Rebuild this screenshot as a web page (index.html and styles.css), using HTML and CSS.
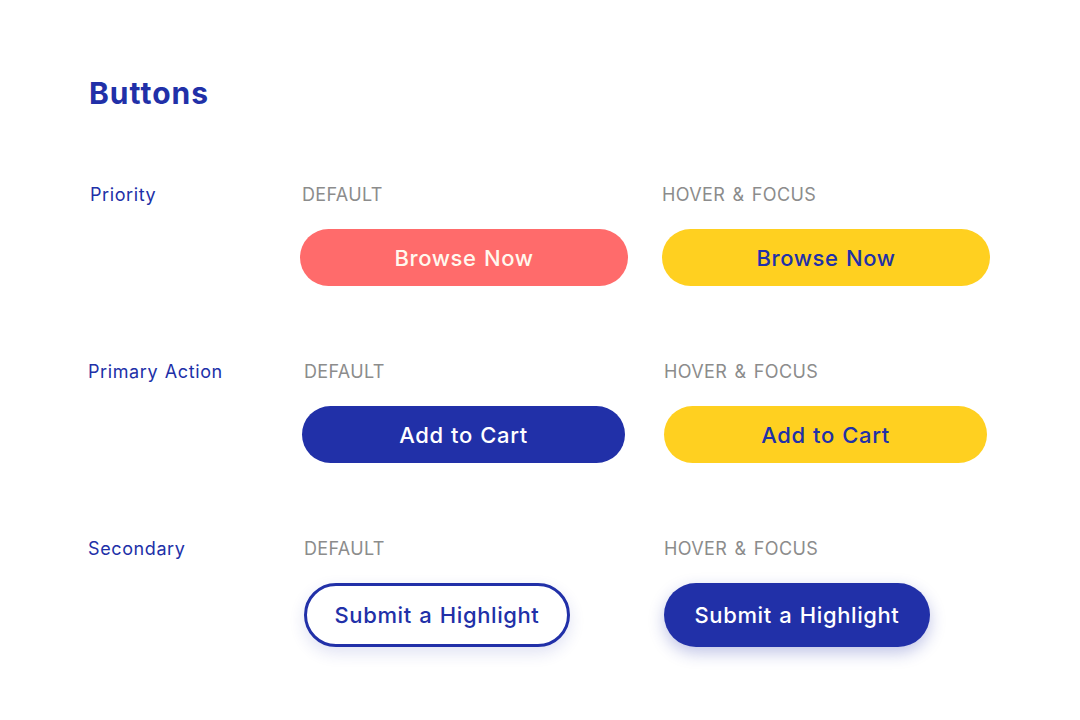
FILE: index.html
```html
<!DOCTYPE html>
<html lang="en">
<head>
<meta charset="utf-8">
<title>Buttons</title>
<link rel="stylesheet" href="styles.css">
</head>
<body>
<main class="page">
  <h1 class="title">Buttons</h1>

  <section class="row row-priority">
    <div class="label label-priority">Priority</div>
    <div class="state state-default">
      <div class="caption">DEFAULT</div>
      <button class="btn btn-coral btn-wide">Browse Now</button>
    </div>
    <div class="state">
      <div class="caption">HOVER &amp; FOCUS</div>
      <button class="btn btn-yellow btn-wide">Browse Now</button>
    </div>
  </section>

  <section class="row row-primary">
    <div class="label">Primary Action</div>
    <div class="state state-default">
      <div class="caption">DEFAULT</div>
      <button class="btn btn-navy btn-mid">Add to Cart</button>
    </div>
    <div class="state">
      <div class="caption">HOVER &amp; FOCUS</div>
      <button class="btn btn-yellow btn-mid">Add to Cart</button>
    </div>
  </section>

  <section class="row row-secondary">
    <div class="label">Secondary</div>
    <div class="state">
      <div class="caption">DEFAULT</div>
      <button class="btn btn-outline btn-tall">Submit a Highlight</button>
    </div>
    <div class="state">
      <div class="caption">HOVER &amp; FOCUS</div>
      <button class="btn btn-solid-shadow btn-tall">Submit a Highlight</button>
    </div>
  </section>
</main>
</body>
</html>
```

FILE: styles.css
```css
* { box-sizing: border-box; }

html, body {
  margin: 0;
  padding: 0;
  background: #ffffff;
}

body {
  font-family: Inter, "Noto Sans", "Liberation Sans", sans-serif;
  color: #2130a8;
}

.page {
  padding: 75px 0 0 88px;
}

.title {
  margin: 0 0 72px 1px;
  font-size: 30px;
  line-height: 36px;
  font-weight: 700;
  color: #2130a8;
  letter-spacing: 1px;
}

.row {
  display: grid;
  align-items: start;
  margin-bottom: 74px;
}

.row-priority { grid-template-columns: 212px 362px 1fr; }
.row-primary { grid-template-columns: 214px 362px 1fr; }
.row-secondary { grid-template-columns: 216px 360px 1fr; }

.label {
  font-size: 18px;
  line-height: 24px;
  color: #2130a8;
  font-weight: 400;
  letter-spacing: 0.6px;
  word-spacing: 1px;
}

.label-priority { padding-left: 2px; }

.state {
  display: flex;
  flex-direction: column;
  align-items: flex-start;
  gap: 22px;
}

.caption {
  font-size: 18px;
  line-height: 24px;
  color: #8c8c8c;
  font-weight: 400;
  letter-spacing: 0.35px;
  word-spacing: 2px;
}

.state-default .caption { padding-left: 2px; }

.btn {
  font-family: inherit;
  font-size: 22px;
  font-weight: 500;
  letter-spacing: 0.6px;
  word-spacing: 1px;
  border: none;
  border-radius: 999px;
  display: flex;
  align-items: center;
  justify-content: center;
  padding: 0;
  cursor: pointer;
}

.btn-wide { width: 328px; height: 57px; }
.btn-mid { width: 323px; height: 57px; }
.btn-tall { width: 266px; height: 64px; }

.btn-coral { background: #ff6b6b; color: #fff8ee; }
.btn-yellow { background: #ffd020; color: #2130a8; }
.btn-navy { background: #2130a8; color: #ffffff; }

.btn-outline {
  background: #ffffff;
  color: #2130a8;
  border: 3px solid #2130a8;
  box-shadow: 0 6px 16px rgba(33, 48, 168, 0.14);
}

.btn-solid-shadow {
  background: #2130a8;
  color: #ffffff;
  box-shadow: 0 6px 16px rgba(33, 48, 168, 0.28);
}
```
